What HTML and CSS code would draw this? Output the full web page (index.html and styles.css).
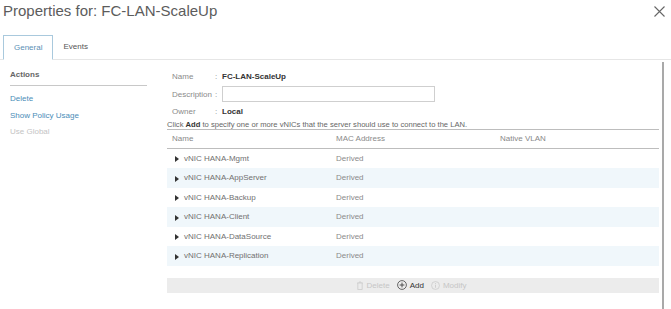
FILE: index.html
```html
<!DOCTYPE html>
<html lang="en">
<head>
    <meta charset="UTF-8">
    <title>Properties for: FC-LAN-ScaleUp</title>
    <link rel="stylesheet" href="styles.css">
</head>
<body>
    <div class="title-bar">
        <span class="title">Properties for: FC-LAN-ScaleUp</span>
        <svg class="close" width="11" height="11" viewBox="0 0 11 11">
            <path d="M0.5 0.5 L10.5 10.5 M10.5 0.5 L0.5 10.5" stroke="#666" stroke-width="1.1" fill="none"/>
        </svg>
    </div>

    <div class="tabs">
        <div class="tab active">General</div>
        <div class="tab">Events</div>
    </div>

    <div class="content">
        <div class="sidebar">
            <div class="actions-title">Actions</div>
            <a class="action">Delete</a>
            <a class="action">Show Policy Usage</a>
            <a class="action disabled">Use Global</a>
        </div>

        <div class="main">
            <div class="form-row">
                <span class="label">Name</span>
                <span class="colon">:</span>
                <span class="value">FC-LAN-ScaleUp</span>
            </div>
            <div class="form-row desc-row">
                <span class="label">Description</span>
                <span class="colon">:</span>
                <span class="input"></span>
            </div>
            <div class="form-row">
                <span class="label">Owner</span>
                <span class="colon">:</span>
                <span class="value">Local</span>
            </div>
            <div class="hint">Click <b>Add</b> to specify one or more vNICs that the server should use to connect to the LAN.</div>

            <div class="table">
                <div class="row head">
                    <span class="col-name">Name</span>
                    <span class="col-mac">MAC Address</span>
                    <span class="col-vlan">Native VLAN</span>
                </div>
                <div class="row"><span class="col-name"><i class="caret"></i>vNIC HANA-Mgmt</span><span class="col-mac">Derived</span><span class="col-vlan"></span></div>
                <div class="row"><span class="col-name"><i class="caret"></i>vNIC HANA-AppServer</span><span class="col-mac">Derived</span><span class="col-vlan"></span></div>
                <div class="row"><span class="col-name"><i class="caret"></i>vNIC HANA-Backup</span><span class="col-mac">Derived</span><span class="col-vlan"></span></div>
                <div class="row"><span class="col-name"><i class="caret"></i>vNIC HANA-Client</span><span class="col-mac">Derived</span><span class="col-vlan"></span></div>
                <div class="row"><span class="col-name"><i class="caret"></i>vNIC HANA-DataSource</span><span class="col-mac">Derived</span><span class="col-vlan"></span></div>
                <div class="row"><span class="col-name"><i class="caret"></i>vNIC HANA-Replication</span><span class="col-mac">Derived</span><span class="col-vlan"></span></div>
            </div>

            <div class="toolbar">
                <span class="tool disabled">
                    <svg width="8" height="9" viewBox="0 0 8 9"><path d="M1 2 H7 M3 2 V1 H5 V2 M1.8 2 V8.5 H6.2 V2" stroke="#ccc" stroke-width="0.8" fill="none"/></svg>
                    Delete
                </span>
                <span class="tool">
                    <svg width="10" height="10" viewBox="0 0 10 10"><circle cx="5" cy="5" r="4.4" stroke="#444" stroke-width="0.8" fill="none"/><path d="M5 2.6 V7.4 M2.6 5 H7.4" stroke="#444" stroke-width="0.9"/></svg>
                    Add
                </span>
                <span class="tool disabled">
                    <svg width="9" height="9" viewBox="0 0 10 10"><circle cx="5" cy="5" r="4.4" stroke="#ccc" stroke-width="0.9" fill="none"/><path d="M5 4.3 V7.5" stroke="#ccc" stroke-width="1"/><circle cx="5" cy="2.9" r="0.6" fill="#ccc"/></svg>
                    Modify
                </span>
            </div>
        </div>

        <div class="scroll-line"></div>
    </div>
</body>
</html>
```

FILE: styles.css
```css
body {
    margin: 0;
    font-family: "Liberation Sans", Arial, sans-serif;
    background-color: #FFFFFF;
    color: #666;
    width: 671px;
    height: 309px;
    overflow: hidden;
}
.title-bar {
    display: flex;
    justify-content: space-between;
    align-items: flex-start;
    height: 32px;
    padding: 1px 6px 0 3px;
    box-sizing: border-box;
}
.title {
    font-size: 15px;
    color: #5c5c5c;
    line-height: 20px;
}
.close {
    margin-top: 5px;
}
.tabs {
    display: flex;
    height: 25px;
    margin-top: 3px;
    padding-left: 3px;
    border-bottom: 1px solid #e6e6e6;
    box-sizing: border-box;
}
.tab {
    font-size: 8px;
    color: #555;
    line-height: 23px;
    padding: 0 10px;
    margin-bottom: -1px;
}
.tab.active {
    color: #5b8fb5;
    border: 1px solid #a9c9dd;
    border-bottom: 1px solid #FFFFFF;
    background-color: #FFFFFF;
}
.content {
    display: flex;
    height: 251px;
}
.sidebar {
    width: 137px;
    padding-left: 10px;
    padding-top: 10px;
    display: flex;
    flex-direction: column;
}
.actions-title {
    font-size: 8px;
    font-weight: bold;
    color: #666;
    height: 15px;
    border-bottom: 1px solid #c8c8c8;
    margin-bottom: 5px;
}
.action {
    font-size: 8px;
    color: #4b8db8;
    line-height: 16.5px;
}
.action.disabled {
    color: #c4c4c4;
}
.main {
    margin-left: 20px;
    width: 492px;
    padding-top: 9px;
}
.form-row {
    display: flex;
    align-items: center;
    font-size: 8px;
    height: 15px;
    padding-left: 5px;
}
.form-row.desc-row {
    height: 20px;
}
.label {
    width: 43px;
    color: #8a8a8a;
}
.colon {
    width: 7px;
    color: #8a8a8a;
}
.value {
    font-weight: bold;
    color: #333;
}
.input {
    display: block;
    width: 211px;
    height: 14px;
    border: 1px solid #cfcfcf;
}
.hint {
    font-size: 7.6px;
    color: #666;
    line-height: 11px;
    margin-bottom: -1px;
}
.hint b {
    color: #333;
}
.table {
    border-top: 1px solid #bdbdbd;
}
.row {
    display: flex;
    align-items: center;
    height: 19.5px;
    font-size: 8px;
    color: #707070;
}
.row:nth-child(odd) {
    background-color: #f0f7fb;
}
.row.head {
    background-color: #FFFFFF;
    color: #888;
    height: 17.5px;
    border-bottom: 1px solid #bdbdbd;
}
.col-name {
    width: 164px;
    padding-left: 5px;
    display: flex;
    align-items: center;
}
.col-mac {
    width: 164px;
    color: #8a8a8a;
}
.col-vlan {
    flex: 1;
}
.caret {
    width: 0;
    height: 0;
    border-top: 3px solid transparent;
    border-bottom: 3px solid transparent;
    border-left: 4px solid #333;
    margin: 2px 5px 0 3px;
}
.toolbar {
    display: flex;
    justify-content: center;
    align-items: center;
    gap: 7px;
    margin-top: 12px;
    height: 15px;
    background-color: #ececec;
    font-size: 8px;
    padding-right: 4px;
}
.tool {
    display: flex;
    align-items: center;
    gap: 3px;
    color: #333;
}
.tool.disabled {
    color: #c6c6c6;
}
.scroll-line {
    width: 2px;
    margin-left: 3px;
    margin-top: 2px;
    background-color: #a9a9a9;
}
```
